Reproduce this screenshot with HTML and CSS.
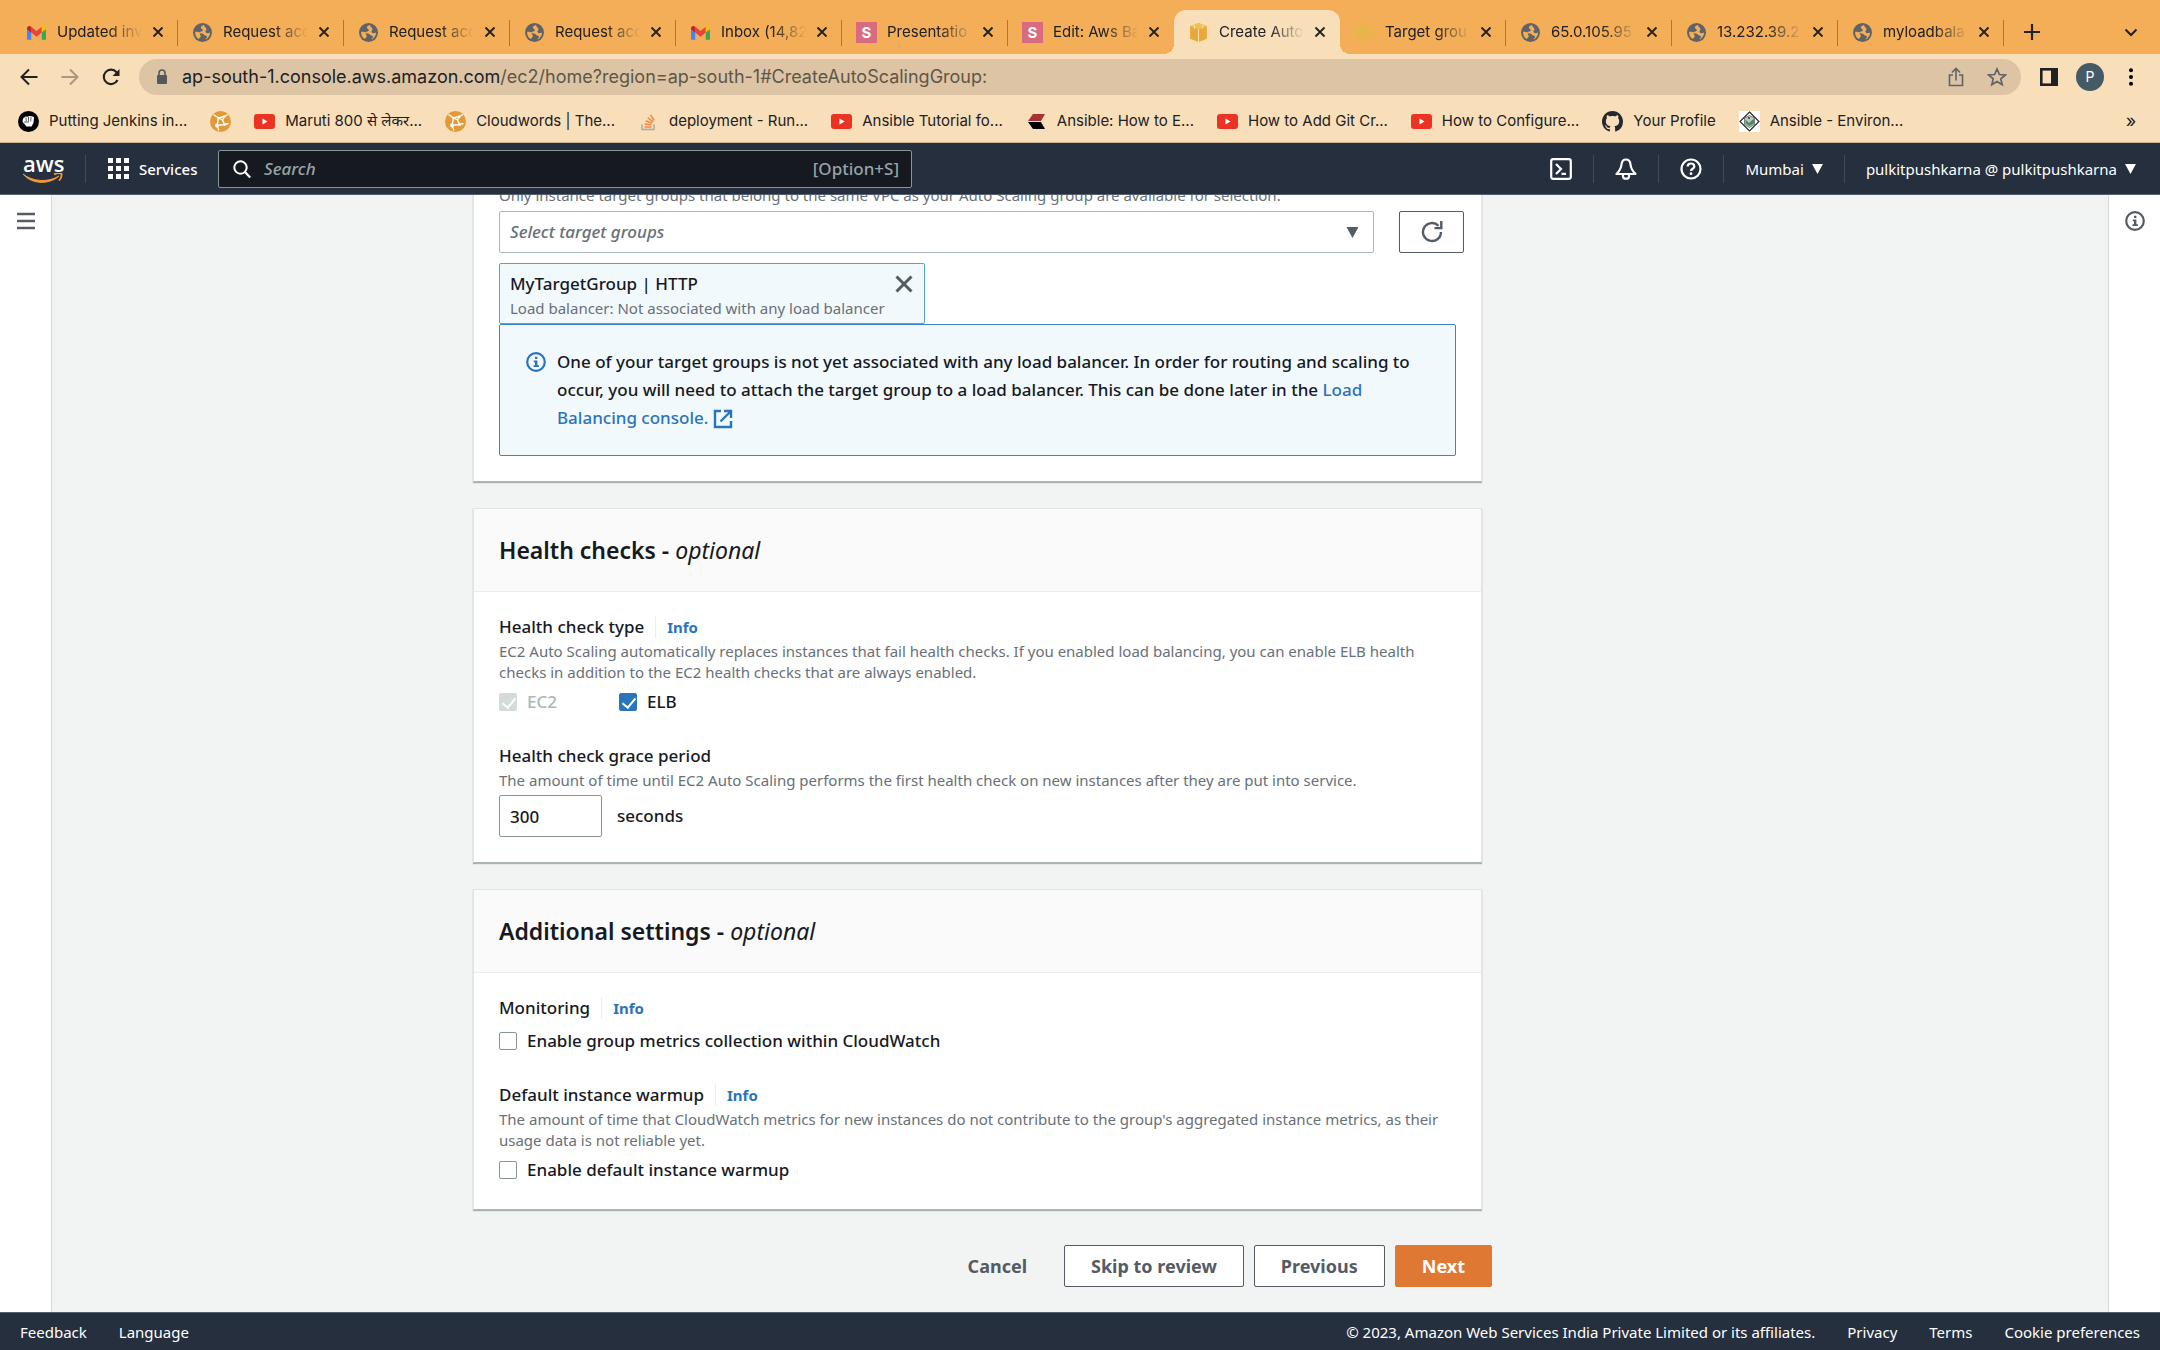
FILE: index.html
```html
<!DOCTYPE html>
<html lang="en">
<head>
    <meta charset="UTF-8">
    <meta name="viewport" content="width=device-width, initial-scale=1.0">
    <title>Create Auto Scaling group</title>
    <link rel="stylesheet" href="styles.css">
</head>
<body>
    <!-- Shared icons -->
    <svg class="sprite" aria-hidden="true">
        <symbol id="globe" viewBox="0 0 20 20">
            <circle cx="10" cy="10" r="9" fill="#5f6368"/>
            <path d="M11.500 2.800c-2 .8-3.500 1.500-3 3 .3 1 1.800.8 1.800 2 0 1.400-2.300.8-3.300 2.200-.9-.9-2.500-.8-4-.6C2.800 12.500 4 15 6.500 16.300c.5-1.300 1.800-1.500 1.800-3 0-1.200-1.300-1.400-.8-2.500 1.500-.6 3.200.5 4.200 1.500 1 .9 2.800.5 2.600 2-.1 1-1.300 1-1.300 2.300 2.500-1.300 4.200-3.800 4.200-6.600-1.500.8-3.500 1-4.200-.2-.8-1.400.8-1.800.8-3 0-1.500-2-1.500-2.300-4z" fill="#f4ae57"/>
        </symbol>
        <symbol id="gmail" viewBox="0 0 20 20">
            <path d="M1 6v11h4V8z" fill="#4285f4"/>
            <path d="M19 6v11h-4V8z" fill="#34a853"/>
            <path d="M5 4.500l5 4 5-4v5.500l-5 4-5-4z" fill="#ea4335"/>
            <path d="M15 4.500c2-1.500 4-.5 4 1.500v1l-4 3z" fill="#fbbc04"/>
            <path d="M5 4.500C3 3 1 4 1 6v1l4 3z" fill="#c5221f"/>
        </symbol>
        <symbol id="cube" viewBox="0 0 20 20">
            <path d="M10 1l8 3v12l-8 3-8-3V4z" fill="#e8a93a"/>
            <path d="M10 1l8 3-8 3-8-3z" fill="#f2c14c"/>
            <path d="M10 7v12M6 2.500v4M14 2.500v4" stroke="#f9deba" stroke-width="1" fill="none"/>
        </symbol>
        <symbol id="cube-faded" viewBox="0 0 20 20">
            <path d="M10 2l8 3v10l-8 3-8-3V5z" fill="#e9b44c"/>
        </symbol>
        <symbol id="close" viewBox="0 0 12 12">
            <path d="M1.500 1.500l9 9M10.500 1.500l-9 9" stroke="currentColor" stroke-width="1.800" fill="none"/>
        </symbol>
        <symbol id="youtube" viewBox="0 0 21 21">
            <rect x="0" y="3" width="21" height="15" rx="3" fill="#ea3323"/>
            <path d="M8.500 7.500l5 3-5 3z" fill="#fff"/>
        </symbol>
        <symbol id="cloudwords" viewBox="0 0 21 21">
            <circle cx="10.500" cy="10.500" r="10.500" fill="#e29a38"/>
            <path d="M3.500 3.500l5 3.500M8.500 7l6-1.500 3.500-2M8.500 7L7 14.500l7.500-1-2-4.500-4-2M7 14.500l2 5M14.500 13.500l4-1M14.500 5.500l-2 3.500" stroke="#fff" stroke-width="1.300" fill="none"/>
            <circle cx="14.500" cy="5.500" r="1.300" fill="#fff"/>
            <circle cx="8.500" cy="7" r="1.300" fill="#fff"/>
            <circle cx="7" cy="14.500" r="1.900" fill="#fff"/>
            <circle cx="14.500" cy="13.500" r="1.500" fill="#fff"/>
        </symbol>
        <symbol id="info" viewBox="0 0 20 20">
            <circle cx="10" cy="10" r="8.800" stroke="currentColor" stroke-width="2.200" fill="none"/>
            <path d="M9 4.700h2.400v2.300H9zM7.700 8.500h3.700v4.800h1.500v1.800H7.500v-1.800H9v-3H7.700z" fill="currentColor"/>
        </symbol>
        <symbol id="caret" viewBox="0 0 12 11">
            <path d="M0 0h12L6 11z" fill="currentColor"/>
        </symbol>
    </svg>

    <!-- Browser tabs -->
    <div class="tabs">
        <div class="tab"><svg class="tab-icon"><use href="#gmail"/></svg><span class="tab-title">Updated inv</span><button class="tab-close" aria-label="Close tab"><svg><use href="#close"/></svg></button></div>
        <div class="tab"><svg class="tab-icon"><use href="#globe"/></svg><span class="tab-title">Request acc</span><button class="tab-close" aria-label="Close tab"><svg><use href="#close"/></svg></button></div>
        <div class="tab"><svg class="tab-icon"><use href="#globe"/></svg><span class="tab-title">Request acc</span><button class="tab-close" aria-label="Close tab"><svg><use href="#close"/></svg></button></div>
        <div class="tab"><svg class="tab-icon"><use href="#globe"/></svg><span class="tab-title">Request acc</span><button class="tab-close" aria-label="Close tab"><svg><use href="#close"/></svg></button></div>
        <div class="tab"><svg class="tab-icon"><use href="#gmail"/></svg><span class="tab-title">Inbox (14,82</span><button class="tab-close" aria-label="Close tab"><svg><use href="#close"/></svg></button></div>
        <div class="tab"><span class="tab-icon letter">S</span><span class="tab-title">Presentatio</span><button class="tab-close" aria-label="Close tab"><svg><use href="#close"/></svg></button></div>
        <div class="tab before-active"><span class="tab-icon letter">S</span><span class="tab-title">Edit: Aws Ba</span><button class="tab-close" aria-label="Close tab"><svg><use href="#close"/></svg></button></div>
        <div class="tab active"><svg class="tab-icon"><use href="#cube"/></svg><span class="tab-title">Create Auto</span><button class="tab-close" aria-label="Close tab"><svg><use href="#close"/></svg></button></div>
        <div class="tab"><svg class="tab-icon"><use href="#cube-faded"/></svg><span class="tab-title">Target grou</span><button class="tab-close" aria-label="Close tab"><svg><use href="#close"/></svg></button></div>
        <div class="tab"><svg class="tab-icon"><use href="#globe"/></svg><span class="tab-title">65.0.105.95</span><button class="tab-close" aria-label="Close tab"><svg><use href="#close"/></svg></button></div>
        <div class="tab"><svg class="tab-icon"><use href="#globe"/></svg><span class="tab-title">13.232.39.2</span><button class="tab-close" aria-label="Close tab"><svg><use href="#close"/></svg></button></div>
        <div class="tab"><svg class="tab-icon"><use href="#globe"/></svg><span class="tab-title">myloadbala</span><button class="tab-close" aria-label="Close tab"><svg><use href="#close"/></svg></button></div>
        <button class="new-tab" aria-label="New tab"><svg viewBox="0 0 16 16"><path d="M8 0v16M0 8h16" stroke="currentColor" stroke-width="2.200"/></svg></button>
        <button class="tab-search" aria-label="Search tabs"><svg viewBox="0 0 14 14"><path d="M1.500 4.500L7 10l5.500-5.500" stroke="currentColor" stroke-width="2" fill="none"/></svg></button>
    </div>

    <!-- Address bar -->
    <div class="toolbar">
        <button class="nav-btn" aria-label="Back"><svg viewBox="0 0 18 18"><path d="M17.500 9H1.500M9 1.500L1.500 9 9 16.500" stroke="currentColor" stroke-width="2" fill="none"/></svg></button>
        <button class="nav-btn faded" aria-label="Forward"><svg viewBox="0 0 18 18"><path d="M.5 9h16M9 1.500L16.500 9 9 16.500" stroke="currentColor" stroke-width="2" fill="none"/></svg></button>
        <button class="nav-btn" aria-label="Reload"><svg viewBox="0 0 18 18"><path d="M15.500 12A7.200 7.200 0 1 1 14.500 4.200" stroke="currentColor" stroke-width="2.100" fill="none"/><path d="M17.500 1v7h-7z" fill="currentColor"/></svg></button>
        <div class="omnibox">
            <svg class="lock" viewBox="0 0 12 16"><rect x="1" y="6" width="10" height="9" rx="1" fill="#55585c"/><path d="M3 7V4a3 3 0 0 1 6 0v3" stroke="#55585c" stroke-width="1.600" fill="none"/></svg>
            <div class="url">ap-south-1.console.aws.amazon.com<span>/ec2/home?region=ap-south-1#CreateAutoScalingGroup:</span></div>
            <button class="omni-btn" aria-label="Share"><svg viewBox="0 0 18 20"><path d="M6 8H2.500v10.500h13V8H12M9 13.500V2M5 5.500l4-4 4 4" stroke="currentColor" stroke-width="1.600" fill="none"/></svg></button>
            <button class="omni-btn" aria-label="Bookmark"><svg viewBox="0 0 20 20"><path d="M10 2l2.400 5.500 6 .5-4.600 3.900 1.400 5.800-5.200-3.100-5.200 3.100 1.400-5.800L1.600 8l6-.5z" stroke="currentColor" stroke-width="1.700" fill="none"/></svg></button>
        </div>
        <button class="side-panel" aria-label="Side panel"><svg viewBox="0 0 18 18"><rect x="1.300" y="1.300" width="15.400" height="15.400" stroke="currentColor" stroke-width="2.600" fill="none"/><path d="M11 1h6v16h-6z" fill="currentColor"/></svg></button>
        <button class="avatar">P</button>
        <button class="menu" aria-label="Menu"><svg viewBox="0 0 4 18"><circle cx="2" cy="2.200" r="2"/><circle cx="2" cy="9" r="2"/><circle cx="2" cy="15.800" r="2"/></svg></button>
    </div>

    <!-- Bookmarks -->
    <div class="bookmarks">
        <a href="#"><svg viewBox="0 0 21 21"><circle cx="10.500" cy="10.500" r="10.500" fill="#000"/><path d="M5 7.500l2.500-2 2 .2 2-.7 2 .3 2.500.7-.5 6-2 3.500H8.500L6 12.500 4.500 11z" fill="#fff"/><path d="M8 6.500l.3 4M10.500 6v4.500M13 6l-.2 4.500M6 11h5" stroke="#000" stroke-width=".6" fill="none"/></svg>Putting Jenkins in...</a>
        <a href="#" aria-label="Cloudwords"><svg><use href="#cloudwords"/></svg></a>
        <a href="#"><svg><use href="#youtube"/></svg>Maruti 800 से लेकर...</a>
        <a href="#"><svg><use href="#cloudwords"/></svg>Cloudwords | The...</a>
        <a href="#"><svg viewBox="0 0 21 21"><path d="M4 13.500v5h12v-5" stroke="#a9a9a9" stroke-width="1.500" fill="none"/><path d="M6.500 16h7M6.700 13l6.800 1M7.700 9.800l6.300 2.500M9.700 6.600l5.300 4.200M12.500 4l3.700 5.500" stroke="#ee8a4a" stroke-width="1.500"/></svg>deployment - Run...</a>
        <a href="#"><svg><use href="#youtube"/></svg>Ansible Tutorial fo...</a>
        <a href="#"><svg viewBox="0 0 21 21"><path d="M7 3h12l-4 7H2z" fill="#a83232"/><path d="M2 11h13l4 7H7z" fill="#000"/></svg>Ansible: How to E...</a>
        <a href="#"><svg><use href="#youtube"/></svg>How to Add Git Cr...</a>
        <a href="#"><svg><use href="#youtube"/></svg>How to Configure...</a>
        <a href="#"><svg viewBox="0 0 16 16"><path d="M8 0C3.580 0 0 3.580 0 8c0 3.540 2.290 6.530 5.470 7.590.4.070.55-.17.55-.38 0-.19-.01-.82-.01-1.490-2.010.37-2.530-.49-2.690-.94-.09-.23-.48-.94-.82-1.130-.28-.15-.68-.52-.01-.53.63-.01 1.080.58 1.230.82.72 1.210 1.870.87 2.330.66.07-.52.28-.87.51-1.070-1.780-.2-3.640-.89-3.640-3.950 0-.87.31-1.590.82-2.150-.08-.2-.36-1.020.08-2.120 0 0 .67-.21 2.200.82.64-.18 1.320-.27 2-.27s1.360.09 2 .27c1.530-1.040 2.200-.82 2.200-.82.44 1.100.16 1.920.08 2.120.51.56.82 1.270.82 2.150 0 3.070-1.870 3.750-3.650 3.950.29.25.54.73.54 1.480 0 1.070-.01 1.930-.01 2.200 0 .21.15.46.55.38A8.010 8.010 0 0 0 16 8c0-4.420-3.580-8-8-8z" fill="#24292f"/></svg>Your Profile</a>
        <a href="#"><svg viewBox="0 0 21 21"><path d="M0 0h21v21H0z" fill="#fff"/><path d="M10.500 1l9.500 9.500-9.500 9.500L1 10.500z" stroke="#222" stroke-width="1.100" fill="none"/><path d="M10.500 4.500l5 2.500v6.500l-5 3-5-3V7z" fill="#b9c9bf" stroke="#555" stroke-width=".7"/><path d="M6.500 8.500l3.500 3.500 5-4.500v5L10.500 15 6.500 12.500z" fill="#4f8a63"/><circle cx="10" cy="7" r="1" fill="#333"/></svg>Ansible - Environ...</a>
        <button class="more" aria-label="More bookmarks">»</button>
    </div>

    <!-- AWS top navigation -->
    <header class="aws-nav">
        <a class="aws-logo" href="#" aria-label="AWS home">
            <span>aws</span>
            <svg viewBox="0 0 40 10"><path d="M0 1c9 7.500 25 9 36 2-9 8.500-27 9-36-2z" fill="#f79a34" stroke="#f79a34" stroke-width="1"/><path d="M31 1.500c3-1.500 6-1.500 7.500-.8.4 2.300-.5 5-2.500 7" stroke="#f79a34" stroke-width="1.800" fill="none"/></svg>
        </a>
        <button class="services"><svg viewBox="0 0 21 21" fill="#fff"><path d="M0 0h5v5H0zM8 0h5v5H8zM16 0h5v5h-5zM0 8h5v5H0zM8 8h5v5H8zM16 8h5v5h-5zM0 16h5v5H0zM8 16h5v5H8zM16 16h5v5h-5z"/></svg>Services</button>
        <label class="search">
            <svg viewBox="0 0 18 18"><circle cx="7.500" cy="7.500" r="6.200" stroke="#fff" stroke-width="2" fill="none"/><path d="M12 12l5.200 5.500" stroke="#fff" stroke-width="2.200"/></svg>
            <input type="search" placeholder="Search" aria-label="Search">
            <span>[Option+S]</span>
        </label>
        <nav class="nav-right">
            <button aria-label="CloudShell"><svg viewBox="0 0 22 22"><rect x="1.200" y="1.200" width="19.600" height="19.600" rx="2" stroke="currentColor" stroke-width="2.200" fill="none"/><path d="M6 6l5 5-5 5M11.500 15.800H16" stroke="currentColor" stroke-width="2.200" fill="none"/></svg></button>
            <button aria-label="Notifications"><svg viewBox="0 0 22 22"><path d="M11 1.500c-2.500 0-4.200 2-4.500 5-.4 4-2 6.500-5 9.500h19c-3-3-4.600-5.500-5-9.500-.3-3-2-5-4.500-5z" stroke="currentColor" stroke-width="2.200" fill="none" stroke-linejoin="round"/><path d="M8 17v1.500c0 3 6 3 6 0V17" stroke="currentColor" stroke-width="2.200" fill="none"/></svg></button>
            <button aria-label="Help"><svg viewBox="0 0 22 22"><circle cx="11" cy="11" r="9.500" stroke="currentColor" stroke-width="2.200" fill="none"/><path d="M7.700 8.600c0-4.200 6.600-4 6.600-.2 0 2.300-3.300 2.400-3.300 4.600" stroke="currentColor" stroke-width="2.200" fill="none"/><circle cx="11" cy="15.700" r="1.400" fill="currentColor"/></svg></button>
            <button>Mumbai<svg class="caret"><use href="#caret"/></svg></button>
            <button>pulkitpushkarna @ pulkitpushkarna<svg class="caret"><use href="#caret"/></svg></button>
        </nav>
    </header>

    <div class="layout">
        <aside class="rail left"><button aria-label="Open navigation"><svg viewBox="0 0 20 20"><path d="M1 3h18M1 10h18M1 17h18" stroke="currentColor" stroke-width="2.600"/></svg></button></aside>

        <main class="content">
            <form class="wizard">
                <section class="panel">
                    <div class="panel-body">
                        <label class="hint" for="target-groups">Only instance target groups that belong to the same VPC as your Auto Scaling group are available for selection.</label>
                        <div class="select-row">
                            <div class="select-box">
                                <select id="target-groups"><option>Select target groups</option></select>
                                <svg class="select-arrow"><use href="#caret"/></svg>
                            </div>
                            <button type="button" class="btn refresh" aria-label="Refresh"><svg viewBox="0 0 22 22"><path d="M20 11a9 9 0 1 1-2.500-6.200" stroke="currentColor" stroke-width="2.400" fill="none"/><path d="M21.500 0v8.200H13.500V6h5.600V0z" fill="currentColor"/></svg></button>
                        </div>
                        <div class="token">
                            <div>
                                <div class="token-name">MyTargetGroup | HTTP</div>
                                <div class="hint">Load balancer: Not associated with any load balancer</div>
                            </div>
                            <button type="button" aria-label="Remove MyTargetGroup"><svg><use href="#close"/></svg></button>
                        </div>
                        <div class="alert">
                            <svg><use href="#info"/></svg>
                            <p>One of your target groups is not yet associated with any load balancer. In order for routing and scaling to<br>occur, you will need to attach the target group to a load balancer. This can be done later in the <a href="#">Load<br>Balancing console. <svg viewBox="0 0 20 20"><path d="M8 2H2v16h16v-6M11 2h7v7M18 2L7.500 12.500" stroke="currentColor" stroke-width="2.400" fill="none"/></svg></a></p>
                        </div>
                    </div>
                </section>

                <section class="panel">
                    <h2>Health checks - <em>optional</em></h2>
                    <div class="panel-body">
                        <div class="field">
                            <div class="label"><span>Health check type</span><a class="info" href="#">Info</a></div>
                            <p class="hint">EC2 Auto Scaling automatically replaces instances that fail health checks. If you enabled load balancing, you can enable ELB health<br>checks in addition to the EC2 health checks that are always enabled.</p>
                            <div class="checks">
                                <label class="check disabled"><input type="checkbox" checked disabled>EC2</label>
                                <label class="check"><input type="checkbox" checked>ELB</label>
                            </div>
                        </div>
                        <div class="field">
                            <label class="label" for="grace">Health check grace period</label>
                            <p class="hint">The amount of time until EC2 Auto Scaling performs the first health check on new instances after they are put into service.</p>
                            <div class="grace"><input id="grace" type="text" value="300">seconds</div>
                        </div>
                    </div>
                </section>

                <section class="panel">
                    <h2>Additional settings - <em>optional</em></h2>
                    <div class="panel-body">
                        <div class="field">
                            <div class="label"><span>Monitoring</span><a class="info" href="#">Info</a></div>
                            <div class="checks">
                                <label class="check"><input type="checkbox">Enable group metrics collection within CloudWatch</label>
                            </div>
                        </div>
                        <div class="field">
                            <div class="label"><span>Default instance warmup</span><a class="info" href="#">Info</a></div>
                            <p class="hint">The amount of time that CloudWatch metrics for new instances do not contribute to the group's aggregated instance metrics, as their<br>usage data is not reliable yet.</p>
                            <div class="checks">
                                <label class="check"><input type="checkbox">Enable default instance warmup</label>
                            </div>
                        </div>
                    </div>
                </section>

                <div class="actions">
                    <button type="button" class="btn link">Cancel</button>
                    <button type="button" class="btn">Skip to review</button>
                    <button type="button" class="btn">Previous</button>
                    <button type="button" class="btn primary">Next</button>
                </div>
            </form>
        </main>

        <aside class="rail right"><button aria-label="Open help panel"><svg><use href="#info"/></svg></button></aside>
    </div>

    <footer class="footer">
        <a href="#">Feedback</a>
        <a href="#">Language</a>
        <span class="copyright">© 2023, Amazon Web Services India Private Limited or its affiliates.</span>
        <a href="#">Privacy</a>
        <a href="#">Terms</a>
        <a href="#">Cookie preferences</a>
    </footer>
</body>
</html>
```
FILE: styles.css
```css
* {
    box-sizing: border-box;
}
body {
    height: 100vh;
    margin: 0;
    display: flex;
    flex-direction: column;
    overflow: hidden;
    background: #f2f3f3;
    color: #16191f;
    font-family: 'Noto Sans', 'Open Sans', sans-serif;
    font-size: 17px;
    font-weight: 500;
    line-height: 28px;
}
button, input, select {
    margin: 0;
    padding: 0;
    border: none;
    background: none;
    color: inherit;
    font: inherit;
}
button {
    display: flex;
    align-items: center;
    justify-content: center;
    cursor: pointer;
}
p {
    margin: 0;
}
a {
    color: #2a74bb;
    text-decoration: none;
}
svg {
    display: block;
    flex-shrink: 0;
}
.sprite {
    position: absolute;
    width: 0;
    height: 0;
}

/* Browser tabs */
.tabs, .toolbar, .bookmarks {
    display: flex;
    align-items: center;
    flex-shrink: 0;
    font-family: Inter, 'Noto Sans', sans-serif;
    font-weight: 400;
    color: #202124;
}
.tabs {
    height: 54px;
    padding: 10px 20px 0 12px;
    background: #f4ae57;
    font-size: 15px;
}
.tab {
    width: 166px;
    height: 44px;
    padding: 0 14px;
    display: flex;
    align-items: center;
    position: relative;
}
.tab::after {
    content: '';
    position: absolute;
    right: 0;
    top: 10px;
    width: 1px;
    height: 26px;
    background: #a3793f;
}
.tab.active {
    background: #f9deba;
    border-radius: 12px 12px 0 0;
}
/* Feet of the active tab */
.tab.active::before, .tab.active::after {
    content: '';
    position: absolute;
    top: auto;
    bottom: 0;
    width: 10px;
    height: 10px;
}
.tab.active::before {
    left: -10px;
    background: radial-gradient(circle at 0 0, transparent 10px, #f9deba 10px);
}
.tab.active::after {
    right: -10px;
    background: radial-gradient(circle at 100% 0, transparent 10px, #f9deba 10px);
}
.tab.before-active::after {
    display: none;
}
.tab-icon {
    width: 21px;
    height: 21px;
    margin-right: 10px;
    flex-shrink: 0;
}
.letter {
    background: #d96b80;
    color: #fff;
    font-weight: bold;
    line-height: 21px;
    text-align: center;
}
.tab-title {
    flex: 1;
    min-width: 0;
    white-space: nowrap;
    -webkit-mask-image: linear-gradient(to right, #000 60%, transparent);
    mask-image: linear-gradient(to right, #000 60%, transparent);
}
.tab-close {
    margin-left: 10px;
}
.tab-close svg {
    width: 12px;
    height: 12px;
}
.new-tab {
    width: 56px;
}
.new-tab svg {
    width: 16px;
    height: 16px;
}
.tab-search {
    width: 18px;
    margin-left: auto;
}
.tab-search svg {
    width: 14px;
    height: 14px;
}

/* Address bar */
.toolbar {
    height: 46px;
    padding: 0 20px 0 8px;
    background: #f9deba;
}
.nav-btn {
    width: 41px;
}
.nav-btn svg {
    width: 18px;
    height: 18px;
}
.faded {
    color: #a89880;
}
.omnibox {
    flex: 1;
    height: 36px;
    margin-left: 8px;
    padding: 0 14px 0 17px;
    display: flex;
    align-items: center;
    border-radius: 18px;
    background: #dcc4a4;
}
.lock {
    width: 12px;
    height: 16px;
    margin-right: 14px;
}
.url {
    flex: 1;
    font-size: 18px;
}
.url span {
    color: #5f5649;
}
.omni-btn {
    margin-left: 21px;
    color: #5f6368;
}
.omni-btn svg {
    width: 20px;
    height: 20px;
}
.side-panel {
    margin-left: 19px;
}
.side-panel svg {
    width: 18px;
    height: 18px;
}
.avatar {
    width: 28px;
    height: 28px;
    margin-left: 18px;
    border-radius: 50%;
    background: #465a65;
    color: #fff;
    font-size: 14px;
}
.menu {
    width: 18px;
    margin-left: 18px;
}
.menu svg {
    width: 4px;
    height: 18px;
}

/* Bookmarks */
.bookmarks {
    height: 43px;
    padding: 0 20px 0 18px;
    gap: 23px;
    background: #f9deba;
    border-bottom: 1px solid #c9b28f;
    font-size: 15px;
}
.bookmarks a {
    display: flex;
    align-items: center;
    gap: 10px;
    color: inherit;
    white-space: nowrap;
}
.bookmarks svg {
    width: 21px;
    height: 21px;
}
.more {
    width: 18px;
    margin-left: auto;
    font-size: 18px;
}

/* AWS navigation */
.aws-nav {
    height: 52px;
    flex-shrink: 0;
    display: flex;
    align-items: center;
    background: #252f3e;
    border-bottom: 1px solid #53606f;
    color: #fff;
    font-size: 15px;
}
.aws-logo {
    width: 86px;
    height: 28px;
    padding-left: 23px;
    border-right: 1px solid #414a57;
    color: #fff;
    font-family: 'Open Sans', sans-serif;
    font-size: 22px;
    font-weight: 600;
    line-height: 16px;
}
.aws-logo span {
    display: block;
}
.aws-logo svg {
    width: 40px;
    height: 10px;
    margin-top: 2px;
}
.services {
    width: 132px;
    padding-left: 22px;
    gap: 10px;
    justify-content: flex-start;
}
.services svg {
    width: 21px;
    height: 21px;
}
.search {
    width: 694px;
    height: 38px;
    padding: 0 12px 0 14px;
    display: flex;
    align-items: center;
    border: 1px solid #879596;
    border-radius: 2px;
    background: #16191f;
    color: #95a5a6;
    font-size: 17px;
}
.search svg {
    width: 18px;
    height: 18px;
    margin-right: 13px;
}
.search input {
    flex: 1;
    outline: none;
}
.search input::placeholder {
    color: #95a5a6;
    font-style: italic;
}
.nav-right {
    margin-left: auto;
    display: flex;
    align-items: center;
}
.nav-right button {
    height: 28px;
    padding: 0 21px;
    gap: 8px;
    font-weight: 400;
}
.nav-right button + button {
    border-left: 1px solid #414a57;
}
.nav-right svg {
    width: 22px;
    height: 22px;
}
.nav-right button:last-child {
    padding-right: 24px;
}
.nav-right .caret {
    width: 11px;
    height: 10px;
}

/* Page */
.layout {
    flex: 1;
    min-height: 0;
    display: flex;
}
.rail {
    width: 52px;
    padding-top: 16px;
    flex-shrink: 0;
    background: #fff;
    color: #545b64;
}
.rail button {
    width: 100%;
}
.rail svg {
    width: 20px;
    height: 20px;
}
.left {
    border-right: 1px solid #d5dbdb;
}
.right {
    border-left: 1px solid #d5dbdb;
}
/* The form is scrolled to its end */
.content {
    flex: 1;
    display: flex;
    flex-direction: column;
    justify-content: flex-end;
    align-items: center;
    overflow: hidden;
    padding: 0 205px 25px 0;
}
.wizard {
    width: 1009px;
}
.panel {
    margin-bottom: 26px;
    background: #fff;
    border: 1px solid #e0e4e4;
    border-bottom-color: #aab7b8;
    box-shadow: 0 1px 1px 0 rgba(0, 28, 36, 0.3);
}
.panel h2 {
    margin: 0;
    padding: 24px 25px;
    background: #fafafa;
    border-bottom: 1px solid #eaeded;
    font-size: 23px;
    font-weight: 600;
    line-height: 34px;
}
.panel h2 em {
    font-weight: 400;
}
.panel-body {
    padding: 21px 25px 25px;
}
.hint {
    display: block;
    color: #687078;
    font-size: 15px;
    font-weight: 400;
    line-height: 21px;
}
.select-row {
    display: flex;
    gap: 25px;
    margin: 5px -8px 10px 0;
}
.select-box {
    flex: 1;
    position: relative;
}
.select-box select {
    width: 100%;
    height: 42px;
    padding: 0 10px;
    appearance: none;
    border: 1px solid #aab7b8;
    border-radius: 2px;
    color: #687078;
    font-style: italic;
}
.select-arrow {
    position: absolute;
    right: 15px;
    top: 16px;
    width: 13px;
    height: 11px;
    color: #545b64;
    pointer-events: none;
}
.btn {
    height: 42px;
    padding: 0 26px;
    border: 1px solid #545b64;
    border-radius: 2px;
    background: #fff;
    color: #545b64;
    font-size: 18px;
    font-weight: 700;
}
.refresh {
    width: 65px;
}
.refresh svg {
    width: 22px;
    height: 22px;
}
.token {
    width: 426px;
    padding: 6px 10px 4px;
    display: flex;
    align-items: flex-start;
    justify-content: space-between;
    border: 1px solid #4aa8cf;
    border-radius: 2px;
    background: #f2f9fd;
}
.token button {
    padding-top: 4px;
    color: #545b64;
}
.token svg {
    width: 20px;
    height: 20px;
}
.alert {
    padding: 23px 26px;
    display: flex;
    gap: 11px;
    border: 1px solid #3d84c6;
    border-radius: 2px;
    background: #f2f9fd;
}
.alert > svg {
    width: 20px;
    height: 20px;
    margin-top: 4px;
    color: #2a74bb;
}
.alert a svg {
    display: inline-block;
    width: 20px;
    height: 20px;
    vertical-align: middle;
}
.field + .field {
    margin-top: 26px;
}
.label {
    display: flex;
    align-items: center;
}
.info {
    height: 22px;
    margin-left: 11px;
    padding-left: 11px;
    border-left: 1px solid #eaeded;
    font-size: 15px;
    font-weight: 700;
    line-height: 22px;
}
.checks {
    display: flex;
    gap: 62px;
    margin-top: 5px;
}
.check {
    display: flex;
    align-items: center;
    gap: 10px;
}
.check input {
    width: 18px;
    height: 18px;
    appearance: none;
    border: 1px solid #879596;
    border-radius: 2px;
    background: #fff;
}
.check input:checked {
    background: #2a74bb;
    border-color: #2a74bb;
}
.check input:checked::before {
    content: '';
    display: block;
    width: 6px;
    height: 11px;
    margin: 1px 5px;
    border: solid #fff;
    border-width: 0 2px 2px 0;
    transform: rotate(40deg);
}
.check.disabled {
    color: #aab7b8;
}
.check input:disabled {
    background: #d5dbdb;
    border-color: #d5dbdb;
}
.grace {
    display: flex;
    align-items: center;
    gap: 15px;
    margin-top: 4px;
}
.grace input {
    width: 103px;
    height: 42px;
    padding: 0 10px;
    border: 1px solid #879596;
    border-radius: 2px;
}
.actions {
    display: flex;
    justify-content: flex-end;
    gap: 10px;
    margin: 35px -10px 0 0;
}
.btn.link {
    border-color: transparent;
    background: none;
}
.btn.primary {
    border-color: #df7832;
    background: #df7832;
    color: #fff;
}

/* Footer */
.footer {
    height: 38px;
    padding: 0 20px;
    flex-shrink: 0;
    display: flex;
    align-items: center;
    gap: 32px;
    background: #252f3e;
    border-top: 1px solid #53606f;
    color: #fff;
    font-size: 15px;
    font-weight: 400;
}
.footer a {
    color: inherit;
}
.copyright {
    margin-left: auto;
}
```
